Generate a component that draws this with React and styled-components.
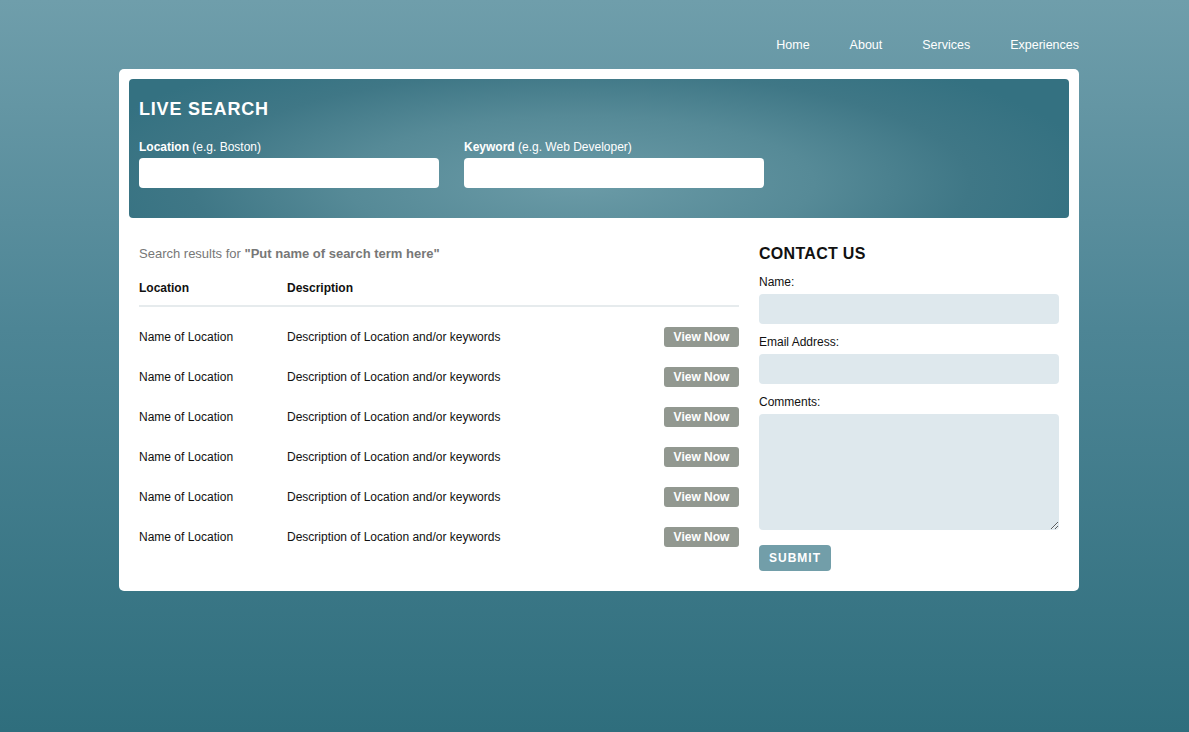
import React from 'react';
import styled, { createGlobalStyle } from 'styled-components';

const GlobalStyle = createGlobalStyle`
  html, body {
    margin: 0;
    padding: 0;
  }
  body {
    min-height: 732px;
    background: linear-gradient(to bottom, #6f9eab 0%, #4d8595 45%, #2f6e7d 100%);
    font-family: "Liberation Sans", Arial, sans-serif;
  }
`;

const Page = styled.div`
  width: 960px;
  margin-left: 119px;
  padding-top: 37px;
`;

const Nav = styled.nav`
  display: flex;
  justify-content: flex-end;
  gap: 40px;
  height: 32px;

  a {
    color: #fff;
    font-size: 12.5px;
    line-height: 16px;
    text-decoration: none;
  }
`;

const Card = styled.div`
  background: #fff;
  border-radius: 5px;
  padding: 10px;
`;

const SearchPanel = styled.section`
  border-radius: 4px;
  height: 139px;
  box-sizing: border-box;
  padding: 19px 10px 0;
  background: radial-gradient(ellipse 520px 150px at 48% 75%, #6b9ba7 0%, #568a97 45%, #3f7786 75%, #347181 100%);
`;

const PanelTitle = styled.h1`
  margin: 0;
  color: #fff;
  font-size: 18px;
  line-height: 22px;
  letter-spacing: 0.8px;
  font-weight: bold;
`;

const Fields = styled.div`
  display: flex;
  gap: 25px;
  margin-top: 20px;
`;

const Field = styled.div`
  display: flex;
  flex-direction: column;
  width: 300px;
`;

const PanelLabel = styled.label`
  color: #fff;
  font-size: 12px;
  line-height: 14px;
  margin-bottom: 4px;

  b {
    font-weight: bold;
  }
`;

const WhiteInput = styled.input`
  height: 30px;
  border: none;
  border-radius: 4px;
  background: #fff;
  box-sizing: border-box;
`;

const Body = styled.div`
  display: flex;
  gap: 20px;
  padding: 28px 10px 10px;
`;

const Results = styled.div`
  width: 600px;
`;

const ResultsFor = styled.p`
  margin: 0;
  font-size: 13px;
  line-height: 16px;
  color: #777;

  b {
    font-weight: bold;
  }
`;

const Table = styled.div`
  margin-top: 19px;
`;

const HeadRow = styled.div`
  display: grid;
  grid-template-columns: 148px 1fr 75px;
  font-size: 12px;
  font-weight: bold;
  color: #111;
  line-height: 14px;
  padding-bottom: 10px;
  border-bottom: 2px solid #e6ebed;
  margin-bottom: 20px;
`;

const Row = styled.div`
  display: grid;
  grid-template-columns: 148px 1fr 75px;
  align-items: center;
  height: 20px;
  margin-bottom: 20px;
  font-size: 12px;
  color: #111;
`;

const ViewButton = styled.button`
  height: 20px;
  width: 75px;
  border: none;
  border-radius: 3px;
  background: #929890;
  color: #fff;
  font-family: inherit;
  font-size: 12px;
  font-weight: bold;
  padding: 0;
`;

const Contact = styled.form`
  width: 300px;
  display: flex;
  flex-direction: column;
`;

const ContactTitle = styled.h2`
  margin: -2px 0 0;
  font-size: 16px;
  line-height: 20px;
  font-weight: bold;
  color: #111;
  letter-spacing: 0.3px;
`;

const ContactLabel = styled.label`
  font-size: 12px;
  line-height: 14px;
  color: #111;
  margin: 11px 0 5px;
`;

const PaleInput = styled.input`
  height: 30px;
  border: none;
  border-radius: 4px;
  background: #dee8ed;
  box-sizing: border-box;
`;

const PaleArea = styled.textarea`
  height: 116px;
  border: none;
  border-radius: 4px;
  background: #dee8ed;
  box-sizing: border-box;
  resize: vertical;
`;

const Submit = styled.button`
  align-self: flex-start;
  margin-top: 15px;
  width: 72px;
  height: 26px;
  border: none;
  border-radius: 4px;
  background: #729ea9;
  color: #fff;
  font-family: inherit;
  font-size: 12px;
  font-weight: bold;
  letter-spacing: 1px;
  padding: 0;
`;

const rows = Array.from({ length: 6 });

export default function App() {
  return (
    <>
      <GlobalStyle />
      <Page>
        <Nav>
          <a href="#">Home</a>
          <a href="#">About</a>
          <a href="#">Services</a>
          <a href="#">Experiences</a>
        </Nav>
        <Card>
          <SearchPanel>
            <PanelTitle>LIVE SEARCH</PanelTitle>
            <Fields>
              <Field>
                <PanelLabel><b>Location</b> (e.g. Boston)</PanelLabel>
                <WhiteInput />
              </Field>
              <Field>
                <PanelLabel><b>Keyword</b> (e.g. Web Developer)</PanelLabel>
                <WhiteInput />
              </Field>
            </Fields>
          </SearchPanel>
          <Body>
            <Results>
              <ResultsFor>
                Search results for <b>"Put name of search term here"</b>
              </ResultsFor>
              <Table>
                <HeadRow>
                  <span>Location</span>
                  <span>Description</span>
                </HeadRow>
                {rows.map((_, i) => (
                  <Row key={i}>
                    <span>Name of Location</span>
                    <span>Description of Location and/or keywords</span>
                    <ViewButton type="button">View Now</ViewButton>
                  </Row>
                ))}
              </Table>
            </Results>
            <Contact onSubmit={e => e.preventDefault()}>
              <ContactTitle>CONTACT US</ContactTitle>
              <ContactLabel>Name:</ContactLabel>
              <PaleInput />
              <ContactLabel>Email Address:</ContactLabel>
              <PaleInput />
              <ContactLabel>Comments:</ContactLabel>
              <PaleArea />
              <Submit type="submit">SUBMIT</Submit>
            </Contact>
          </Body>
        </Card>
      </Page>
    </>
  );
}
